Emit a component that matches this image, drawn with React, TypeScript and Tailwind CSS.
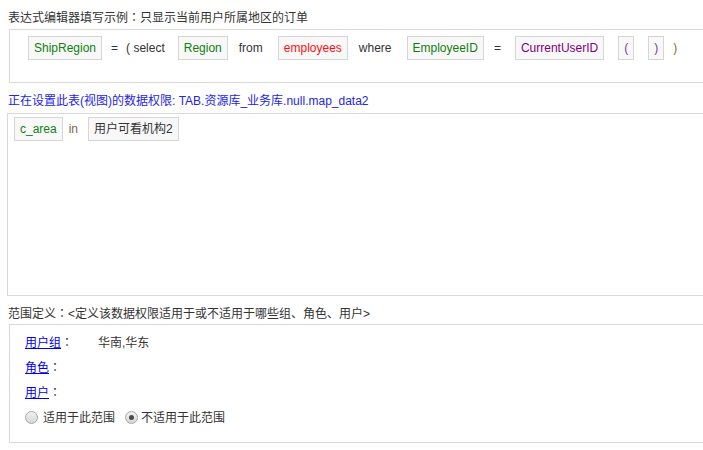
import React from 'react'

const font = { fontFamily: '"Liberation Sans", "Noto Sans CJK SC", sans-serif' }
const tcFont = { fontFamily: '"Noto Sans CJK TC", "Noto Sans CJK SC", sans-serif' }

// full-width colon, centred in its cell as in the original
const Colon = () => <span style={tcFont} className="leading-none">：</span>

interface ChipProps {
	text: string
	color: string
	tight?: boolean
}

const Chip = ({ text, color, tight }: ChipProps) => (
	<span
		className={
			'inline-flex h-[24px] items-center border border-[#d6d6d6] bg-[#f8f8f8] px-[5px] whitespace-nowrap ' +
			(tight ? 'ml-[6px] mr-[2px] ' : 'ml-[9px] mr-[5px] ') +
			color
		}
	>
		{text}
	</span>
)

const Word = ({ text, color = 'text-[#333]', space = 'mx-[4px]' }: { text: string; color?: string; space?: string }) => (
	<span className={'inline-flex h-[24px] items-center whitespace-pre ' + space + ' ' + color}>
		{text}
	</span>
)

const Radio = ({ checked }: { checked?: boolean }) => (
	<span className="inline-flex h-[13px] w-[13px] items-center justify-center rounded-full border border-[#a9a9a9] bg-gradient-to-b from-[#f2f2f2] to-[#d6d6d6]">
		{checked && <span className="h-[5px] w-[5px] rounded-full bg-[#4a4a4a]" />}
	</span>
)

const ScopeRow = ({ label, value }: { label: string; value?: string }) => (
	<div className="flex h-[25px] items-center">
		<span className="inline-block w-[73px]">
			<a href="#" className="text-[#0000ee] underline">{label}</a>
			<Colon />
		</span>
		{value && <span>{value}</span>}
	</div>
)

const App = () => {
	return (
		<div style={font} className="h-[450px] w-[703px] overflow-hidden bg-white text-[12px] text-[#333]">
			<div className="mt-[10px] h-[17px] pl-[8px] leading-[17px]">表达式编辑器填写示例<Colon />只显示当前用户所属地区的订单</div>
			<div className="ml-[9px] mt-[2px] h-[54px] w-[720px] border border-[#d9d9d9]">
				<div className="flex items-start pl-[9px] pt-[6px]">
					<Chip text="ShipRegion" color="text-[#108010]" />
					<Word text="=" />
					<Word text="( select" />
					<Chip text="Region" color="text-[#108010]" />
					<Word text="from" space="mx-[6px]" />
					<Chip text="employees" color="text-[#ff1010]" />
					<Word text="where" space="mx-[6px]" />
					<Chip text="EmployeeID" color="text-[#108010]" />
					<Word text="=" space="mx-[5px]" />
					<Chip text="CurrentUserID" color="text-[#800080]" />
					<Chip text="(" color="text-[#7a3aa0]" />
					<Chip text=")" color="text-[#7a3aa0]" />
					<Word text=")" color="text-[#8a6a30]" />
				</div>
			</div>

			<div className="mt-[10px] h-[17px] pl-[8px] leading-[17px] text-[#2424e8]">
				正在设置此表(视图)的数据权限: TAB.资源库_业务库.null.map_data2
			</div>
			<div className="ml-[7px] mt-[3px] h-[183px] w-[720px] border border-[#d9d9d9]">
				<div className="flex items-start pt-[3px]">
					<Chip text="c_area" color="text-[#108010]" tight />
					<Word text="in" color="text-[#7d6a3c]" space="mx-[4px]" />
					<Chip text="用户可看机构2" color="text-[#333]" tight />
				</div>
			</div>

			<div className="mt-[10px] h-[17px] pl-[8px] leading-[17px]">范围定义<Colon />&lt;定义该数据权限适用于或不适用于哪些组、角色、用户&gt;</div>
			<div className="ml-[9px] mt-[1px] h-[119px] w-[720px] border border-[#d9d9d9] pl-[15px] pt-[5px]">
				<ScopeRow label="用户组" value="华南,华东" />
				<ScopeRow label="角色" />
				<ScopeRow label="用户" />
				<div className="flex h-[25px] items-center">
					<Radio />
					<span className="ml-[5px]">适用于此范围</span>
					<span className="ml-[10px] flex"><Radio checked /></span>
					<span className="ml-[3px]">不适用于此范围</span>
				</div>
			</div>
		</div>
	)
}

export default App
